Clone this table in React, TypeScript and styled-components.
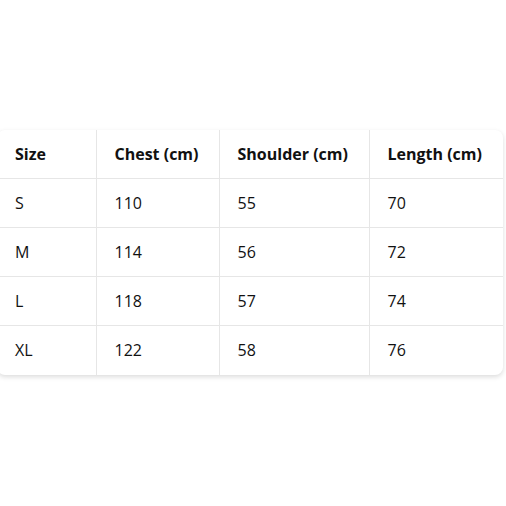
import React from "react";
import styled, { createGlobalStyle } from "styled-components";

const Global = createGlobalStyle`
  html, body { margin: 0; padding: 0; background: #ffffff; }
  body { font-family: "Open Sans", "Noto Sans", sans-serif; }
`;

const Page = styled.div`
  width: 506px;
  height: 506px;
  display: flex;
  align-items: center;
  overflow: hidden;
`;

const Card = styled.div`
  margin-left: -3px;
  margin-top: -2px;
  width: 506px;
  flex: none;
  border-radius: 8px;
  overflow: hidden;
  background: #fff;
  box-shadow: 0 2px 5px rgba(0, 0, 0, 0.14);
`;

const Table = styled.table`
  width: 100%;
  border-collapse: collapse;
  table-layout: fixed;
  color: #111;
  font-size: 16px;
`;

const Row = styled.tr<{ $last?: boolean }>`
  & > * {
    border-bottom: ${(p) => (p.$last ? "none" : "1px solid #e6e6e6")};
  }
`;

const HeadCell = styled.th`
  height: 49px;
  box-sizing: border-box;
  padding: 0 18px;
  text-align: left;
  font-weight: 700;
  white-space: nowrap;
  &:not(:last-child) { border-right: 1px solid #e6e6e6; }
`;

const Cell = styled.td`
  height: 49px;
  box-sizing: border-box;
  padding: 0 18px;
  text-align: left;
  font-weight: 400;
  &:not(:last-child) { border-right: 1px solid #e6e6e6; }
`;

const headers = ["Size", "Chest (cm)", "Shoulder (cm)", "Length (cm)"];
const rows = [
  ["S", "110", "55", "70"],
  ["M", "114", "56", "72"],
  ["L", "118", "57", "74"],
  ["XL", "122", "58", "76"],
];
const widths = [99, 123, 150, 134];

export default function App() {
  return (
    <>
      <Global />
      <Page>
        <Card>
          <Table>
            <colgroup>
              {widths.map((w, i) => (
                <col key={i} style={{ width: w }} />
              ))}
            </colgroup>
            <thead>
              <Row>
                {headers.map((h) => (
                  <HeadCell key={h}>{h}</HeadCell>
                ))}
              </Row>
            </thead>
            <tbody>
              {rows.map((r, ri) => (
                <Row key={r[0]} $last={ri === rows.length - 1}>
                  {r.map((c, i) => (
                    <Cell key={i}>{c}</Cell>
                  ))}
                </Row>
              ))}
            </tbody>
          </Table>
        </Card>
      </Page>
    </>
  );
}
